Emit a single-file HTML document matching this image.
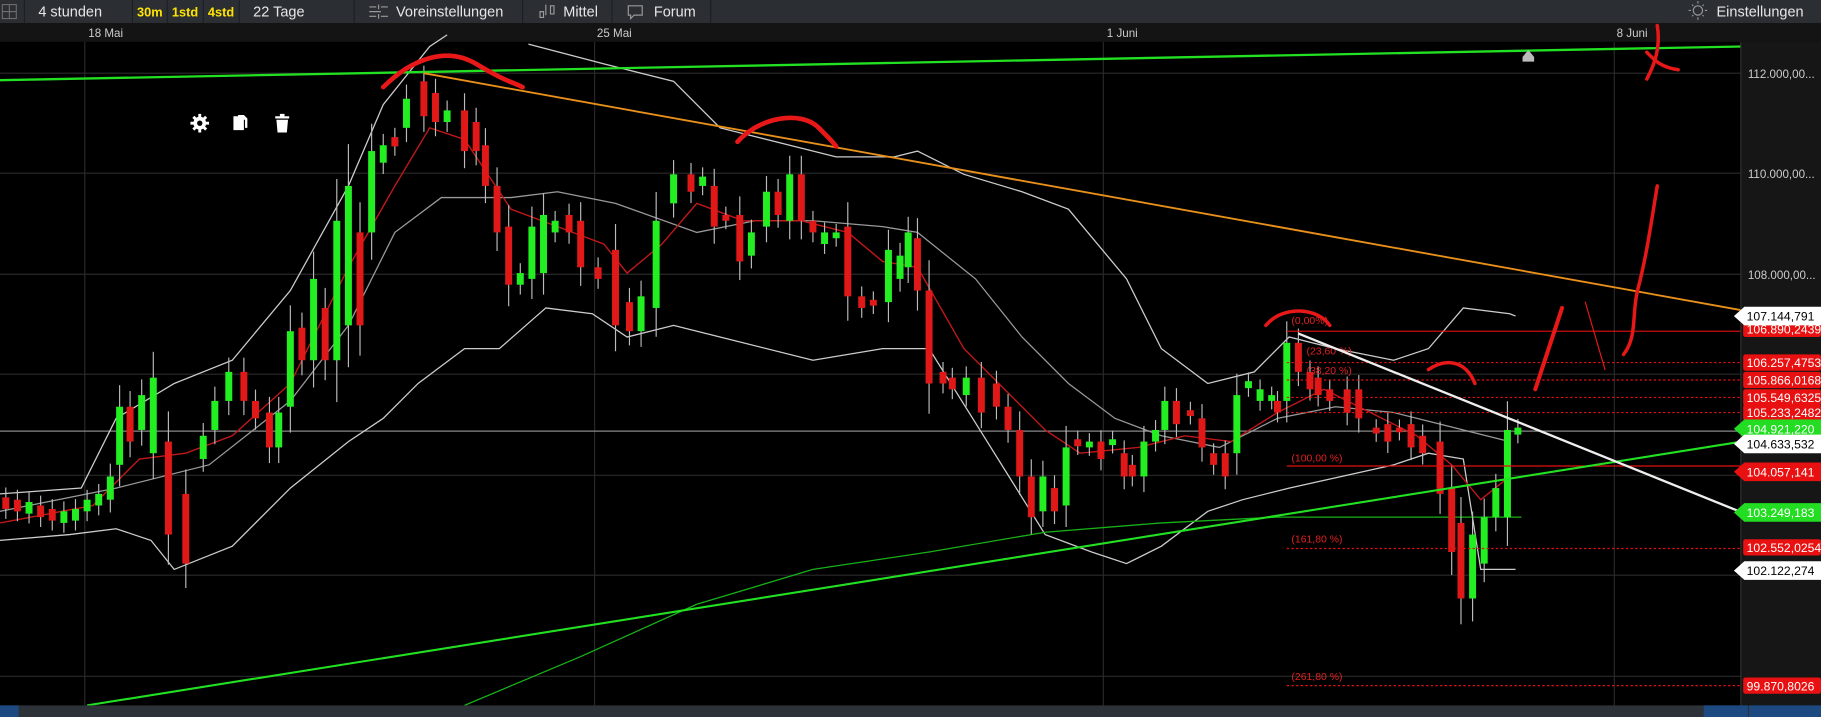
<!DOCTYPE html>
<html><head><meta charset="utf-8"><style>
html,body{margin:0;padding:0;background:#000;width:1821px;height:717px;overflow:hidden}
svg{display:block}
text{font-family:"Liberation Sans",sans-serif}
</style></head><body>
<svg id="s" width="1821" height="717" viewBox="0 0 1568 617" preserveAspectRatio="none" xmlns="http://www.w3.org/2000/svg">
<rect width="1568" height="617" fill="#000"/>
<!-- toolbar -->
<rect x="0" y="0" width="1568" height="20" fill="#2b2f34"/>
<g stroke="#1c1f22" stroke-width="1">
<line x1="21" y1="0" x2="21" y2="20"/><line x1="114" y1="0" x2="114" y2="20"/><line x1="144" y1="0" x2="144" y2="20"/><line x1="175" y1="0" x2="175" y2="20"/><line x1="206" y1="0" x2="206" y2="20"/><line x1="305" y1="0" x2="305" y2="20"/><line x1="450" y1="0" x2="450" y2="20"/><line x1="527" y1="0" x2="527" y2="20"/><line x1="612" y1="0" x2="612" y2="20"/>
</g>
<g stroke="#777" fill="none" stroke-width="0.8"><rect x="2" y="4" width="12" height="12"/><path d="M8 4v12M2 10h12"/></g>
<g fill="#e6e6e6" font-size="12.5">
<text x="33" y="14">4 stunden</text>
<text x="218" y="14">22 Tage</text>
<text x="341" y="14">Voreinstellungen</text>
<text x="485" y="14">Mittel</text>
<text x="563" y="14">Forum</text>
<text x="1478" y="14">Einstellungen</text>
</g>
<g fill="#ffe400" font-size="11" font-weight="bold"><text x="118" y="14">30m</text><text x="148" y="14">1std</text><text x="179" y="14">4std</text></g>
<g stroke="#999" stroke-width="1" fill="none">
<path d="M318 6h6M328 6h6M318 10h10M318 14h6M328 14h6M326 4v4M326 12v4"/><path d="M465 15v-5h3v5zM470 13v-9M474 12v-7h3v7z"/>
<path d="M541 5h12v8h-7l-3 3v-3h-2z"/>
<circle cx="1462" cy="9" r="4"/><path d="M1456 9h-2M1470 9h-2M1462 3v-2M1462 17v-2M1458 5l-1-1M1466 13l1 1M1466 5l1-1M1458 13l-1 1"/>
</g>
<!-- date axis -->
<rect x="0" y="20" width="1568" height="16" fill="#141414"/>
<g fill="#ccc" font-size="10"><text x="76" y="32">18 Mai</text><text x="514" y="32">25 Mai</text><text x="953" y="32">1 Juni</text><text x="1392" y="32">8 Juni</text></g>
<!-- grid -->
<g stroke="#2a2a2a" stroke-width="1">
<line x1="73" y1="36" x2="73" y2="607"/><line x1="512" y1="36" x2="512" y2="607"/><line x1="950" y1="36" x2="950" y2="607"/><line x1="1390" y1="36" x2="1390" y2="607"/>
<line x1="0" y1="63" x2="1500" y2="63"/><line x1="0" y1="149" x2="1500" y2="149"/><line x1="0" y1="236" x2="1500" y2="236"/><line x1="0" y1="322" x2="1500" y2="322"/><line x1="0" y1="409" x2="1500" y2="409"/><line x1="0" y1="495" x2="1500" y2="495"/><line x1="0" y1="582" x2="1500" y2="582"/>
</g>
<line x1="0" y1="371" x2="1500" y2="371" stroke="#888" stroke-width="1"/>
<g id="bands" fill="none" stroke-width="1.1"></g>
<g id="candles"></g>
<!-- fib lines -->
<g stroke="#e01010" stroke-width="1">
<line x1="1108" y1="285" x2="1500" y2="285"/><line x1="1108" y1="401" x2="1500" y2="401"/>
<g stroke-dasharray="2,2"><line x1="1108" y1="312" x2="1500" y2="312"/><line x1="1108" y1="327" x2="1500" y2="327"/><line x1="1108" y1="342" x2="1500" y2="342"/><line x1="1108" y1="355" x2="1500" y2="355"/><line x1="1108" y1="472" x2="1500" y2="472"/><line x1="1108" y1="590" x2="1500" y2="590"/></g>
</g>
<g fill="#e02020" font-size="9"><text x="1112" y="279">(0,00%)</text><text x="1112" y="397">(100,00 %)</text><text x="1112" y="467">(161,80 %)</text><text x="1112" y="585">(261,80 %)</text><text x="1125" y="305">(23,60 %)</text><text x="1125" y="322">(38,20 %)</text></g>
<!-- trend lines -->
<line x1="0" y1="69" x2="1500" y2="40" stroke="#22e022" stroke-width="2"/>
<line x1="365" y1="63" x2="1500" y2="267" stroke="#e8901a" stroke-width="1.6"/>
<line x1="75" y1="607" x2="1500" y2="380" stroke="#22e022" stroke-width="1.8"/>
<line x1="1118" y1="287" x2="1500" y2="441" stroke="#eee" stroke-width="2"/>
<path d="M1311 49l5-6 5 6v4h-10z" fill="#bbb"/>
<!-- icons -->
<g fill="#fff">
<g stroke="#fff" stroke-width="2.5"><path d="M172 98v16M164 106h16M166.5 100.5l11 11M177.5 100.5l-11 11"/></g>
<circle cx="172" cy="106" r="5.5"/><circle cx="172" cy="106" r="2.3" fill="#000"/>
<path d="M201 100h6v3h3v9h-9zM205 99h5l3 3v8h-2v-7h-6z"/>
<path d="M237 100h12v2h-12zM241 98h4v2h-4zM238 103h10l-1 11h-8z"/>
</g>
<!-- hand drawings -->
<g stroke="#e81818" fill="none" stroke-linecap="round">
<path d="M330 75C355 50 385 40 410 55S440 70 450 75" stroke-width="4"/>
<path d="M635 122C655 100 690 95 705 110S715 120 720 126" stroke-width="4"/>
<path d="M1090 280C1105 262 1135 265 1145 280" stroke-width="3"/>
<path d="M1230 318C1245 308 1262 310 1270 330" stroke-width="3"/>
<path d="M1322 335L1345 265" stroke-width="3.5"/>
<path d="M1365 260L1382 318" stroke-width="1"/>
<path d="M1398 305C1410 290 1405 270 1410 250C1418 220 1422 190 1427 160" stroke-width="3"/>
<path d="M1427 22C1430 40 1425 55 1418 68M1418 45C1425 52 1430 58 1445 60" stroke-width="3"/>
</g>
<!-- right axis -->
<rect x="1499" y="36" width="69" height="571" fill="#161616"/>
<line x1="1499" y1="36" x2="1499" y2="607" stroke="#333"/>
<g fill="#ccc" font-size="10"><text x="1505" y="67">112.000,00...</text><text x="1505" y="153">110.000,00...</text><text x="1505" y="240">108.000,00...</text></g>
<g id="labels" font-size="10.5"></g>
<!-- bottom bar -->
<rect x="0" y="607" width="1568" height="10" fill="#2c3238"/>
<rect x="1467" y="607" width="38" height="10" fill="#1c4a80"/><rect x="1506" y="607" width="62" height="10" fill="#1c4a80"/>
<rect x="0" y="607" width="16" height="10" fill="#1c4a80"/>
</svg>
<script>
var NS='http://www.w3.org/2000/svg';
function pl(pts,col,w){var p=document.createElementNS(NS,'polyline');p.setAttribute('points',pts);p.setAttribute('stroke',col);p.setAttribute('stroke-width',w||1.1);p.setAttribute('fill','none');document.getElementById('bands').appendChild(p);}
pl('0,425 70,420 100,360 150,330 200,310 250,250 300,160 330,90 370,40 385,30','#ccc');
pl('455,38 520,55 580,70 620,110 680,125 720,135 770,135 790,130 830,150 880,165 920,180 970,240 1000,300 1040,330 1080,320 1110,290 1150,300 1200,310 1230,300 1260,265 1300,270 1305,272','#ccc');
pl('0,465 60,460 100,455 130,465 150,490 200,470 250,420 300,380 330,360 360,330 400,300 430,300 470,265 510,270 540,290 580,280 620,290 700,310 760,300 800,300 850,380 900,460 940,475 970,485 1000,470 1040,440 1070,430 1110,420 1200,400 1230,390 1260,395 1275,490 1305,490','#ccc');
pl('0,440 100,420 180,400 250,345 300,280 340,200 380,170 440,170 480,165 530,175 600,200 650,190 700,190 760,195 790,200 840,240 880,290 920,330 960,360 1000,375 1050,385 1100,360 1150,350 1200,355 1240,365 1300,380','#999');
pl('0,450 80,435 120,395 160,390 200,375 250,330 300,230 340,160 370,110 400,120 440,180 480,195 520,210 540,235 570,210 600,175 640,190 690,190 730,200 760,225 790,230 830,300 870,340 900,370 930,390 980,385 1020,375 1060,380 1100,355 1140,335 1180,355 1220,375 1250,400 1275,430 1300,410','#c01818',1.2);
pl('400,607 500,565 600,520 700,490 800,475 900,458 1000,450 1100,445 1200,445 1310,445','#18b018',1.1);
var c=[[5,428,438,0],[15,430,440,0],[25,432,442,1],[35,435,445,0],[45,438,448,0],[55,440,450,1],[65,438,448,1],[75,430,440,1],[85,425,435,1],[95,410,430,1],[103,350,400,1],[112,350,380,0],[122,340,370,1],[132,325,390,1],[145,380,460,0],[160,425,485,0],[175,375,395,1],[185,345,370,1],[197,320,345,1],[210,320,345,0],[220,345,360,0],[232,355,385,0],[240,355,385,1],[250,285,350,1],[260,282,310,0],[270,240,310,1],[280,265,310,0],[290,190,310,1],[300,160,280,1],[310,200,280,0],[320,130,200,1],[330,125,140,1],[340,118,126,0],[350,85,110,1],[365,70,100,0],[375,80,105,0],[385,95,105,1],[400,95,130,0],[410,105,130,0],[418,125,160,0],[428,160,200,0],[438,195,245,0],[448,235,245,1],[458,195,240,1],[468,185,235,1],[478,190,200,1],[490,185,200,0],[500,190,230,0],[515,230,240,0],[530,215,280,0],[542,260,285,0],[552,255,285,1],[565,190,265,1],[580,150,175,1],[595,150,165,0],[605,152,160,1],[615,160,195,0],[625,185,190,0],[637,185,225,0],[647,200,220,1],[660,165,195,1],[670,165,185,0],[680,150,190,1],[690,150,190,0],[700,190,200,0],[710,200,210,1],[720,200,205,1],[730,195,255,0],[742,255,265,0],[752,258,263,0],[765,215,260,1],[775,220,240,1],[782,200,230,1],[790,205,250,0],[800,250,330,0],[812,320,330,0],[820,325,335,0],[832,325,340,1],[845,325,355,0],[858,330,350,0],[868,350,370,0],[878,370,410,0],[888,410,445,0],[898,410,440,1],[908,420,440,0],[918,385,435,1],[928,378,384,0],[938,380,385,1],[948,380,395,0],[958,378,383,1],[968,390,410,0],[975,400,410,0],[985,380,410,1],[995,370,380,1],[1003,345,370,1],[1013,345,365,0],[1025,353,358,0],[1035,360,385,0],[1045,390,400,0],[1055,390,410,0],[1065,340,390,1],[1075,328,334,1],[1085,335,345,1],[1095,340,345,1],[1100,345,355,0],[1108,295,345,1],[1118,295,320,0],[1128,320,335,0],[1135,325,340,0],[1145,335,345,0],[1160,335,355,0],[1170,335,360,0],[1185,368,373,0],[1195,365,380,0],[1205,368,372,0],[1215,365,385,0],[1225,375,390,0],[1240,380,425,0],[1250,420,475,0],[1258,450,515,0],[1268,460,515,1],[1278,445,485,1],[1288,420,445,1],[1298,370,445,1],[1307,368,374,1]];
var g=document.getElementById('candles'),h='';
c.forEach(function(k){var col=k[3]?'#22ee22':'#e01818';var ext=(k[2]-k[1])*0.25+6;
h+='<line x1="'+k[0]+'" y1="'+(k[1]-ext)+'" x2="'+k[0]+'" y2="'+(k[2]+ext)+'" stroke="#bbb" stroke-width="1"/>';
h+='<rect x="'+(k[0]-3)+'" y="'+k[1]+'" width="6" height="'+Math.max(2,k[2]-k[1])+'" fill="'+col+'"/>';});
g.innerHTML=h;
var L=[[283,'106.890,2439','#e81010','#fff',0],[272,'107.144,791','#fff','#000',1],[312,'106.257,4753','#e81010','#fff',0],[327,'105.866,0168','#e81010','#fff',0],[342,'105.549,6325','#e81010','#fff',0],[355,'105.233,2482','#e81010','#fff',0],[369,'104.921,220','#22dd22','#fff',1],[382,'104.633,532','#fff','#000',1],[406,'104.057,141','#e81010','#fff',1],[441,'103.249,183','#22dd22','#fff',1],[471,'102.552,0254','#e81010','#fff',0],[491,'102.122,274','#fff','#000',1],[590,'99.870,8026','#e81010','#fff',0]];
var s='';L.forEach(function(l){var y=l[0];
if(l[4])s+='<path d="M1493 '+y+'l9 -8h66v16h-66z" fill="'+l[2]+'"/>';else s+='<rect x="1501" y="'+(y-7)+'" width="67" height="14" rx="2" fill="'+l[2]+'"/>';
s+='<text x="1504" y="'+(y+4)+'" fill="'+l[3]+'">'+l[1]+'</text>';});
document.getElementById('labels').innerHTML=s;
</script>
</body></html>
